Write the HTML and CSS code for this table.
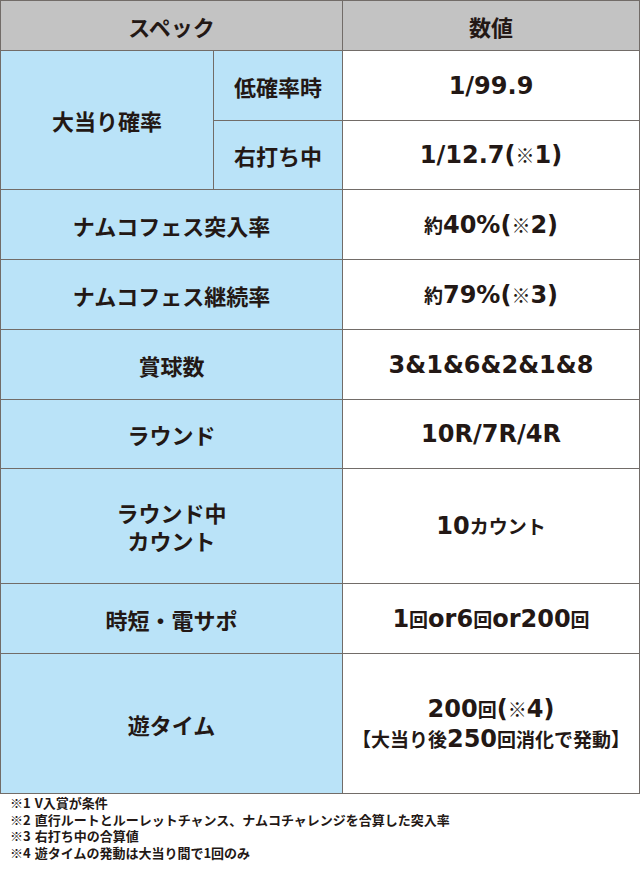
FILE: index.html
```html
<!DOCTYPE html>
<html lang="ja">
<head>
<meta charset="utf-8">
<title>スペック</title>
<link rel="stylesheet" href="styles.css">
</head>
<body>
<div class="spec">
  <div class="cell head span2"><span class="txt">スペック</span></div>
  <div class="cell head"><span class="txt">数値</span></div>

  <div class="cell label rowspan2"><span class="txt">大当り確率</span></div>
  <div class="cell label"><span class="txt">低確率時</span></div>
  <div class="cell value"><span class="txt">1/99.9</span></div>
  <div class="cell label"><span class="txt">右打ち中</span></div>
  <div class="cell value"><span class="txt">1/12.7(<span class="jp">※</span>1)</span></div>

  <div class="cell label span2"><span class="txt">ナムコフェス突入率</span></div>
  <div class="cell value"><span class="txt"><span class="jp">約</span>40%(<span class="jp">※</span>2)</span></div>

  <div class="cell label span2"><span class="txt">ナムコフェス継続率</span></div>
  <div class="cell value"><span class="txt"><span class="jp">約</span>79%(<span class="jp">※</span>3)</span></div>

  <div class="cell label span2"><span class="txt">賞球数</span></div>
  <div class="cell value"><span class="txt">3&amp;1&amp;6&amp;2&amp;1&amp;8</span></div>

  <div class="cell label span2"><span class="txt">ラウンド</span></div>
  <div class="cell value"><span class="txt">10R/7R/4R</span></div>

  <div class="cell label span2"><span class="txt">ラウンド中<br>カウント</span></div>
  <div class="cell value"><span class="txt">10<span class="jp">カウント</span></span></div>

  <div class="cell label span2"><span class="txt">時短・電サポ</span></div>
  <div class="cell value"><span class="txt">1<span class="jp">回</span>or6<span class="jp">回</span>or200<span class="jp">回</span></span></div>

  <div class="cell label span2"><span class="txt">遊タイム</span></div>
  <div class="cell value"><span class="txt">200<span class="jp">回</span>(<span class="jp">※</span>4)<br><span class="jp">【大当り後</span>250<span class="jp">回消化で発動】</span></span></div>
</div>
<div class="notes">
  <p><span class="mark">※1</span>V入賞が条件</p>
  <p><span class="mark">※2</span>直行ルートとルーレットチャンス、ナムコチャレンジを合算した突入率</p>
  <p><span class="mark">※3</span>右打ち中の合算値</p>
  <p><span class="mark">※4</span>遊タイムの発動は大当り間で1回のみ</p>
</div>
</body>
</html>
```

FILE: styles.css
```css
html, body {
  margin: 0;
  padding: 0;
  background: #ffffff;
}

body {
  width: 640px;
  color: #231815;
  font-family: "Noto Sans CJK JP", sans-serif;
}

.spec {
  display: grid;
  grid-template-columns: 212px 128px 296px;
  grid-template-rows: 49px 69px 68px 69px 69px 69px 68px 114px 69px 139px;
  gap: 1px;
  padding: 1px;
  background: #726c68;
  width: 640px;
  box-sizing: border-box;
}

.cell {
  display: flex;
  align-items: center;
  justify-content: center;
  text-align: center;
  font-weight: 700;
}

.txt {
  display: block;
}

.head {
  background: #c3c3c3;
  font-size: 22px;
  font-family: "Noto Sans CJK JP", sans-serif;
}

.label {
  background: #bae3f8;
  font-size: 22px;
  font-family: "Noto Sans CJK JP", sans-serif;
  line-height: 28px;
}

.value {
  background: #ffffff;
  font-family: "DejaVu Sans", "Noto Sans CJK JP", sans-serif;
  font-weight: 700;
  font-size: 24px;
  line-height: 30px;
  white-space: nowrap;
}

.value .jp {
  font-family: "Noto Sans CJK JP", sans-serif;
  font-weight: 700;
  font-size: 19px;
}

.span2 {
  grid-column: 1 / 3;
}

.rowspan2 {
  grid-row: span 2;
}

.notes {
  padding: 1px 0 0 10px;
}

.notes p {
  margin: 0;
  font-size: 13px;
  line-height: 16.7px;
  font-weight: 700;
  white-space: nowrap;
}

.mark {
  margin-right: 4px;
}
```
